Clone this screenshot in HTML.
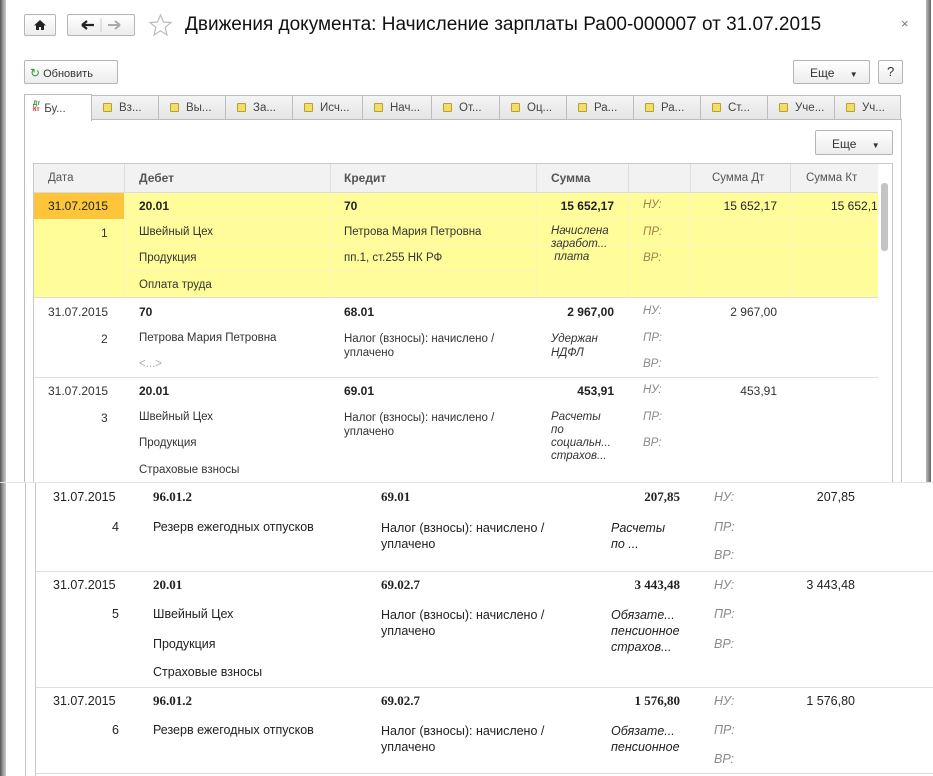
<!DOCTYPE html>
<html><head><meta charset="utf-8"><style>
*{margin:0;padding:0;box-sizing:border-box}
body{width:933px;height:776px;position:relative;overflow:hidden;background:#fff;font-family:"Liberation Sans",Arial,sans-serif;color:#333;font-size:11.5px}
.a{position:absolute;white-space:nowrap}
.btn{position:absolute;border:1px solid #b5b5b5;border-radius:2px;background:linear-gradient(#fff,#ececec)}
.tab{position:absolute;top:95px;height:25px;border:1px solid #bdbdbd;border-bottom:none;background:linear-gradient(#f4f4f4,#e4e4e4);font-size:11.5px;color:#444;padding:6px 0 0 11px}
.ti{display:inline-block;width:9px;height:9px;border:1px solid #b9a12c;background:#f3dd6a;margin-right:7px;vertical-align:-1px;border-radius:1px}
.hl{position:absolute;height:1px;background:#dedede}
.vl{position:absolute;width:1px;background:#dedede}
.b{font-weight:bold;font-size:12px}
.i{font-style:italic}
.r{text-align:right}
.g{color:#8a8a8a;font-style:italic}
.gy{color:#a08050;font-style:italic}
.bot{font-size:12.5px;color:#222}
.ser{font-family:"Liberation Serif",serif;font-weight:bold;font-size:13px}
</style></head><body>
<div class="a" style="left:0;top:0;width:6px;height:776px;background:linear-gradient(90deg,#555,#999,#ccc)"></div>
<div class="a" style="left:926px;top:0;width:5px;height:483px;background:linear-gradient(90deg,#bbb,#666)"></div>
<div class="vl" style="left:892px;top:163px;height:320px;background:#cfcfcf"></div>
<div class="vl" style="left:901px;top:119px;height:364px;background:#c8c8c8"></div>

<div class="btn" style="left:24px;top:14px;width:32px;height:22px"><svg width="30" height="20" viewBox="0 0 30 20"><path d="M15 5 L9 10.5 H11 V15 H14 V12 H16 V15 H19 V10.5 H21 Z" fill="#222"/></svg></div>
<div class="btn" style="left:67px;top:14px;width:68px;height:22px"><svg width="66" height="20" viewBox="0 0 66 20"><path d="M14 10 H26 M14 10 L19 6 M14 10 L19 14" stroke="#222" stroke-width="2.2" fill="none"/><line x1="33" y1="3" x2="33" y2="17" stroke="#ccc"/><path d="M40 10 H52 M52 10 L47 6 M52 10 L47 14" stroke="#aaa" stroke-width="2" fill="none"/></svg></div>
<svg class="a" style="left:148px;top:13px" width="25" height="24" viewBox="0 0 25 24"><path d="M12.5 2 L15.5 9 L23 9.5 L17.2 14.3 L19 22 L12.5 17.8 L6 22 L7.8 14.3 L2 9.5 L9.5 9 Z" fill="none" stroke="#bbb" stroke-width="1.2"/></svg>
<div class="a" style="left:185px;top:14px;font-size:19px;color:#111">Движения документа: Начисление зарплаты Ра00-000007 от 31.07.2015</div>
<div class="a" style="left:901px;top:16px;font-size:13px;color:#777">×</div>

<div class="btn" style="left:24px;top:60px;width:94px;height:24px;font-size:11px;color:#333;padding:5px 0 0 5px"><span style="color:#2a9a2a;font-size:12px">↻</span> Обновить</div>
<div class="btn" style="left:793px;top:60px;width:77px;height:24px;font-size:12px;padding:5px 0 0 16px">Еще <span style="font-size:8px;margin-left:12px">▼</span></div>
<div class="btn" style="left:878px;top:60px;width:25px;height:24px;font-size:13px;padding:3px 0 0 8px">?</div>

<div class="tab" style="left:91px;width:68px"><span class="ti"></span>Вз...</div>
<div class="tab" style="left:158px;width:68px"><span class="ti"></span>Вы...</div>
<div class="tab" style="left:225px;width:68px"><span class="ti"></span>За...</div>
<div class="tab" style="left:292px;width:71px"><span class="ti"></span>Исч...</div>
<div class="tab" style="left:362px;width:70px"><span class="ti"></span>Нач...</div>
<div class="tab" style="left:431px;width:69px"><span class="ti"></span>От...</div>
<div class="tab" style="left:499px;width:68px"><span class="ti"></span>Оц...</div>
<div class="tab" style="left:566px;width:68px"><span class="ti"></span>Ра...</div>
<div class="tab" style="left:633px;width:68px"><span class="ti"></span>Ра...</div>
<div class="tab" style="left:700px;width:68px"><span class="ti"></span>Ст...</div>
<div class="tab" style="left:767px;width:68px"><span class="ti"></span>Уче...</div>
<div class="tab" style="left:834px;width:67px"><span class="ti"></span>Уч...</div>
<div class="a" style="left:24px;top:119px;width:878px;height:1px;background:#bdbdbd"></div>
<div class="a" style="left:24px;top:94px;width:68px;height:27px;border:1px solid #bdbdbd;border-bottom:none;background:#fff;padding:6px 0 0 8px;font-size:11.5px;color:#444"><span style="display:inline-block;font-size:6px;line-height:6px;vertical-align:1px;margin-right:4px"><b style="color:#2a8a2a">Дт</b><br><b style="color:#d02020">Кт</b></span>Бу...</div>
<div class="vl" style="left:24px;top:120px;height:363px;background:#bdbdbd"></div>
<div class="btn" style="left:815px;top:130px;width:78px;height:25px;font-size:12px;padding:6px 0 0 16px">Еще <span style="font-size:8px;margin-left:12px">▼</span></div>

<div class="a" style="left:33px;top:163px;width:860px;height:320px;border:1px solid #c8c8c8;border-bottom:none"></div>
<div class="a" style="left:34px;top:164px;width:844px;height:29px;background:#f2f2f2;border-bottom:1px solid #dcdcdc"></div>
<div class="vl" style="left:124px;top:164px;height:29px"></div>
<div class="vl" style="left:330px;top:164px;height:29px"></div>
<div class="vl" style="left:536px;top:164px;height:29px"></div>
<div class="vl" style="left:628px;top:164px;height:29px"></div>
<div class="vl" style="left:690px;top:164px;height:29px"></div>
<div class="vl" style="left:790px;top:164px;height:29px"></div>
<div class="a" style="left:48px;top:172px;color:#555">Дата</div>
<div class="a b" style="left:139px;top:171px;color:#555">Дебет</div>
<div class="a b" style="left:344px;top:171px;color:#555">Кредит</div>
<div class="a b" style="left:551px;top:171px;color:#555">Сумма</div>
<div class="a" style="left:712px;top:172px;color:#555">Сумма Дт</div>
<div class="a" style="left:806px;top:172px;color:#555">Сумма Кт</div>
<div class="a" style="left:881px;top:183px;width:7px;height:68px;background:#c4c4c4;border-radius:3px"></div>

<div class="a" style="left:34px;top:193px;width:844px;height:104px;background:#fffd9a"></div>
<div class="a" style="left:34px;top:193px;width:90px;height:26px;background:#fcc53a"></div>
<div class="a" style="left:124px;top:219px;width:754px;height:1px;background:#fdf3c0"></div>
<div class="a" style="left:124px;top:245px;width:754px;height:1px;background:#fdf3c0"></div>
<div class="a" style="left:124px;top:271px;width:412px;height:1px;background:#fdf3c0"></div>
<div class="vl" style="left:124px;top:193px;height:104px;background:#fdf3c0"></div>
<div class="vl" style="left:330px;top:193px;height:104px;background:#fdf3c0"></div>
<div class="vl" style="left:536px;top:193px;height:104px;background:#fdf3c0"></div>
<div class="vl" style="left:628px;top:193px;height:104px;background:#fdf3c0"></div>
<div class="vl" style="left:690px;top:193px;height:104px;background:#fdf3c0"></div>
<div class="vl" style="left:790px;top:193px;height:104px;background:#fdf3c0"></div>
<div class="hl" style="left:34px;top:297px;width:844px"></div>
<div class="a" style="left:48px;top:199px;font-size:12px;color:#222">31.07.2015</div>
<div class="a" style="left:101px;top:226px;font-size:12px">1</div>
<div class="a b" style="left:139px;top:199px;color:#222">20.01</div>
<div class="a" style="left:139px;top:226px">Швейный Цех</div>
<div class="a" style="left:139px;top:252px">Продукция</div>
<div class="a" style="left:139px;top:279px">Оплата труда</div>
<div class="a b" style="left:344px;top:199px;color:#222">70</div>
<div class="a" style="left:344px;top:226px">Петрова Мария Петровна</div>
<div class="a" style="left:344px;top:252px">пп.1, ст.255 НК РФ</div>
<div class="a b r" style="left:536px;top:199px;width:78px;color:#222">15 652,17</div>
<div class="a i" style="left:551px;top:225px;line-height:13px;color:#333">Начислена<br>заработ...<br>&nbsp;плата</div>
<div class="a gy" style="left:643px;top:199px">НУ:</div>
<div class="a gy" style="left:643px;top:226px">ПР:</div>
<div class="a gy" style="left:643px;top:252px">ВР:</div>
<div class="a r" style="left:690px;top:199px;width:87px;font-size:12px;color:#222">15 652,17</div>
<div class="a" style="left:831px;top:199px;font-size:12px;color:#222">15 652,1</div>

<div class="a" style="left:48px;top:305px;font-size:12px">31.07.2015</div>
<div class="a" style="left:101px;top:332px;font-size:12px">2</div>
<div class="a b" style="left:139px;top:305px;color:#222">70</div>
<div class="a" style="left:139px;top:332px">Петрова Мария Петровна</div>
<div class="a" style="left:139px;top:358px;color:#aaa">&lt;...&gt;</div>
<div class="a b" style="left:344px;top:305px;color:#222">68.01</div>
<div class="a" style="left:344px;top:332px;line-height:14px">Налог (взносы): начислено /<br>уплачено</div>
<div class="a b r" style="left:536px;top:305px;width:78px;color:#222">2 967,00</div>
<div class="a i" style="left:551px;top:332px;line-height:14px">Удержан<br>НДФЛ</div>
<div class="a g" style="left:643px;top:305px">НУ:</div>
<div class="a g" style="left:643px;top:332px">ПР:</div>
<div class="a g" style="left:643px;top:358px">ВР:</div>
<div class="a r" style="left:690px;top:305px;width:87px;font-size:12px">2 967,00</div>
<div class="hl" style="left:34px;top:377px;width:844px"></div>

<div class="a" style="left:48px;top:384px;font-size:12px">31.07.2015</div>
<div class="a" style="left:101px;top:411px;font-size:12px">3</div>
<div class="a b" style="left:139px;top:384px;color:#222">20.01</div>
<div class="a" style="left:139px;top:411px">Швейный Цех</div>
<div class="a" style="left:139px;top:437px">Продукция</div>
<div class="a" style="left:139px;top:464px">Страховые взносы</div>
<div class="a b" style="left:344px;top:384px;color:#222">69.01</div>
<div class="a" style="left:344px;top:411px;line-height:14px">Налог (взносы): начислено /<br>уплачено</div>
<div class="a b r" style="left:536px;top:384px;width:78px;color:#222">453,91</div>
<div class="a i" style="left:551px;top:411px;line-height:13px">Расчеты<br>по<br>социальн...<br>страхов...</div>
<div class="a g" style="left:643px;top:384px">НУ:</div>
<div class="a g" style="left:643px;top:411px">ПР:</div>
<div class="a g" style="left:643px;top:437px">ВР:</div>
<div class="a r" style="left:690px;top:384px;width:87px;font-size:12px">453,91</div>

<div class="a" style="left:6px;top:483px;width:927px;height:293px;background:#fff"></div>
<div class="hl" style="left:0;top:482px;width:933px;background:#e4e4e4"></div>
<div class="vl" style="left:25px;top:483px;height:293px;background:#c8c8c8"></div>
<div class="vl" style="left:35px;top:483px;height:293px;background:#c8c8c8"></div>

<div class="bot">
<div class="a" style="left:53px;top:490px">31.07.2015</div>
<div class="a" style="left:112px;top:520px">4</div>
<div class="a ser" style="left:153px;top:489px">96.01.2</div>
<div class="a" style="left:153px;top:520px">Резерв ежегодных отпусков</div>
<div class="a ser" style="left:381px;top:489px">69.01</div>
<div class="a" style="left:381px;top:520px;line-height:16px">Налог (взносы): начислено /<br>уплачено</div>
<div class="a ser r" style="left:600px;top:489px;width:80px">207,85</div>
<div class="a i" style="left:611px;top:520px;line-height:16px">Расчеты<br>по ...</div>
<div class="a g" style="left:714px;top:490px">НУ:</div>
<div class="a g" style="left:714px;top:520px">ПР:</div>
<div class="a g" style="left:714px;top:548px">ВР:</div>
<div class="a r" style="left:770px;top:490px;width:85px">207,85</div>
<div class="hl" style="left:36px;top:571px;width:897px"></div>

<div class="a" style="left:53px;top:578px">31.07.2015</div>
<div class="a" style="left:112px;top:607px">5</div>
<div class="a ser" style="left:153px;top:577px">20.01</div>
<div class="a" style="left:153px;top:607px">Швейный Цех</div>
<div class="a" style="left:153px;top:637px">Продукция</div>
<div class="a" style="left:153px;top:665px">Страховые взносы</div>
<div class="a ser" style="left:381px;top:577px">69.02.7</div>
<div class="a" style="left:381px;top:607px;line-height:16px">Налог (взносы): начислено /<br>уплачено</div>
<div class="a ser r" style="left:600px;top:577px;width:80px">3 443,48</div>
<div class="a i" style="left:611px;top:607px;line-height:16px">Обязате...<br>пенсионное<br>страхов...</div>
<div class="a g" style="left:714px;top:578px">НУ:</div>
<div class="a g" style="left:714px;top:607px">ПР:</div>
<div class="a g" style="left:714px;top:637px">ВР:</div>
<div class="a r" style="left:770px;top:578px;width:85px">3 443,48</div>
<div class="hl" style="left:36px;top:687px;width:897px"></div>

<div class="a" style="left:53px;top:694px">31.07.2015</div>
<div class="a" style="left:112px;top:723px">6</div>
<div class="a ser" style="left:153px;top:693px">96.01.2</div>
<div class="a" style="left:153px;top:723px">Резерв ежегодных отпусков</div>
<div class="a ser" style="left:381px;top:693px">69.02.7</div>
<div class="a" style="left:381px;top:723px;line-height:16px">Налог (взносы): начислено /<br>уплачено</div>
<div class="a ser r" style="left:600px;top:693px;width:80px">1 576,80</div>
<div class="a i" style="left:611px;top:723px;line-height:16px">Обязате...<br>пенсионное</div>
<div class="a g" style="left:714px;top:694px">НУ:</div>
<div class="a g" style="left:714px;top:723px">ПР:</div>
<div class="a g" style="left:714px;top:752px">ВР:</div>
<div class="a r" style="left:770px;top:694px;width:85px">1 576,80</div>
<div class="hl" style="left:36px;top:773px;width:897px"></div>
</div>
</body></html>
